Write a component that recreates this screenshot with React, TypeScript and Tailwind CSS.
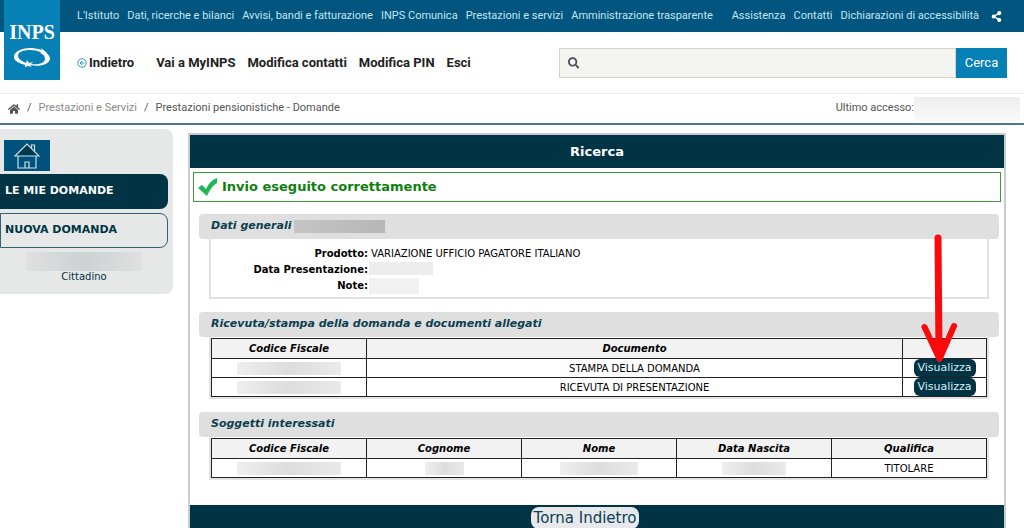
import React, { useState } from 'react';
import { FaHome, FaSearch, FaShareAlt } from 'react-icons/fa';

interface Documento {
  id: number;
  nome: string;
}

const menuPrincipale = [
  "L'Istituto",
  'Dati, ricerche e bilanci',
  'Avvisi, bandi e fatturazione',
  'INPS Comunica',
  'Prestazioni e servizi',
  'Amministrazione trasparente',
];

const menuServizio = ['Assistenza', 'Contatti', 'Dichiarazioni di accessibilità'];

const azioni = ['Vai a MyINPS', 'Modifica contatti', 'Modifica PIN', 'Esci'];

const documenti: Documento[] = [
  { id: 1, nome: 'STAMPA DELLA DOMANDA' },
  { id: 2, nome: 'RICEVUTA DI PRESENTAZIONE' },
];

const Logo = () => (
  <a
    href="#"
    aria-label="INPS"
    className="absolute top-0 left-1 flex h-20 w-14 flex-col items-center bg-[#0680b5] pt-[18px] text-white"
  >
    <span className="font-['Liberation_Serif',serif] text-xl leading-7 font-bold">INPS</span>
    <svg className="mt-[2px] h-5 w-9" viewBox="0 0 36 20" fill="currentColor">
      <path
        fillRule="evenodd"
        d="M0 8C1 3 8 0 17 0c4 0 8 1 11 2l-1-2 6 5-6 1 1-1C25 3 20 2 16 2 9 2 4 4 4 8c0 3 4 5 8 7l1-3 2 3 4-1-3 3 2 2-4-1-3 1v-2C4 15-1 12 0 8Z"
      />
      <path d="M16 16c9 1 15-1 15-5 0-3-2-5-5-6l5-1c3 2 5 4 5 7-1 6-11 8-20 6Z" />
    </svg>
  </a>
);

const TopBar = () => (
  <div className="flex h-8 items-center justify-between bg-[#01557e] pl-[77px] text-[#c3e6f3]">
    <nav className="flex items-center gap-2 whitespace-nowrap">
      {menuPrincipale.map((voce) => (
        <a key={voce} href="#">{voce}</a>
      ))}
    </nav>
    <nav className="flex items-center gap-2 pr-[22px] whitespace-nowrap">
      {menuServizio.map((voce) => (
        <a key={voce} href="#">{voce}</a>
      ))}
      <button type="button" aria-label="Condividi" className="pl-1 text-white">
        <FaShareAlt size={11} />
      </button>
    </nav>
  </div>
);

const NavBar = () => {
  const [query, setQuery] = useState('');

  return (
    <div className="flex h-[61px] items-center justify-between pr-[17px] pl-[77px]">
      <nav className="flex items-center gap-3 text-[13px] font-bold whitespace-nowrap text-[#222]">
        <a href="#" className="mr-[10px] flex items-center gap-[2px]">
          <svg className="h-[10px] w-[10px] text-[#2b9bc7]" viewBox="0 0 20 20" fill="none" stroke="currentColor" strokeWidth={2}>
            <circle cx="10" cy="10" r="8.5" />
            <path d="M15 10H6M10 6l-4 4 4 4" />
          </svg>
          Indietro
        </a>
        {azioni.map((azione) => (
          <a key={azione} href="#">{azione}</a>
        ))}
      </nav>
      <form className="flex h-[30px] w-[448px]" onSubmit={(e) => e.preventDefault()}>
        <label className="flex flex-1 items-center border border-[#d3d5cd] bg-[#f4f5f0] pl-2">
          <FaSearch size={12} className="text-[#4a4f58]" />
          <input
            type="text"
            aria-label="Cerca nel sito"
            className="ml-2 w-full bg-transparent outline-none"
            value={query}
            onChange={(e) => setQuery(e.target.value)}
          />
        </label>
        <button type="submit" className="w-[51px] bg-[#0680b5] text-[13px] text-white">Cerca</button>
      </form>
    </div>
  );
};

const Breadcrumb = () => (
  <div className="flex h-8 items-center justify-between border-t border-b-2 border-t-[#ececec] border-b-[#4c7698] pr-1 pl-2 text-[11px] text-[#555]">
    <nav className="flex items-center gap-[7px]">
      <a href="#" aria-label="Home" className="flex"><FaHome size={12} /></a>
      <span>/</span>
      <a href="#" className="text-[#8a8a8a]">Prestazioni e Servizi</a>
      <span>/</span>
      <span>Prestazioni pensionistiche - Domande</span>
    </nav>
    <div className="flex items-center">
      Ultimo accesso:
      <span className="h-6 w-[106px] bg-linear-to-b from-[#eeeeee] to-[#fafafa]" />
    </div>
  </div>
);

const Sidebar = () => (
  <aside className="w-[173px] shrink-0 self-start rounded-r-lg bg-[#e6e8e8] pt-[11px] pb-[11px] text-[#003444]">
    <a href="#" aria-label="Pagina iniziale" className="ml-1 flex h-[31px] w-[46px] items-center justify-center bg-[#00527c]">
      <svg className="h-[26px] w-[26px]" viewBox="0 0 26 26" fill="none" stroke="#c9e2ea" strokeWidth={1.2}>
        <path d="M4 13v12h18V13" />
        <path d="M1 13 13 1l12 12H1Z" fill="#003850" />
        <path d="M17.500 5V2h3v6.500M11 25v-6h4v6" />
      </svg>
    </a>
    <nav className="mt-[3px] mr-[5px] flex flex-col gap-1 text-[11px] font-bold">
      <a href="#" className="flex h-[35px] items-center rounded-r-lg bg-[#003444] pl-[5px] text-white">LE MIE DOMANDE</a>
      <a href="#" className="flex h-[35px] items-center rounded-r-lg border border-[#2c6472] pl-1">NUOVA DOMANDA</a>
    </nav>
    <div className="mt-1 flex flex-col items-center pr-[5px] text-[10px]">
      <span className="h-[19px] w-[116px] bg-linear-to-r from-[#dfe1e1] via-[#ced1d1] to-[#dfe1e1]" />
      <span className="leading-3">Cittadino</span>
    </div>
  </aside>
);

const Sezione: React.FC<{ titolo: string; oscurato?: boolean; children: React.ReactNode }> = ({
  titolo,
  oscurato,
  children,
}) => (
  <section className="mr-[5px] ml-[9px]">
    <h2 className="flex h-[25px] items-center rounded bg-[#dfdfdf] px-3 text-[11px] font-bold text-[#0b3f50] italic">
      {titolo}
      {oscurato && <span className="ml-[3px] h-[13px] w-[91px] bg-linear-to-r from-[#c4c4c4] to-[#b7b7b7]" />}
    </h2>
    {children}
  </section>
);

const Oscurato: React.FC<{ className: string }> = ({ className }) => (
  <span className={`mx-auto block h-[13px] bg-linear-to-r from-[#eeeeee] via-[#dddddd] to-[#eaeaea] ${className}`} />
);

// Freccia rossa che indica il pulsante "Visualizza"
const Freccia = () => (
  <svg
    className="pointer-events-none absolute -bottom-[5px] left-[18px] h-[132px] w-9"
    viewBox="0 0 36 132"
    fill="none"
    stroke="#fa0a0a"
    strokeLinecap="round"
    strokeLinejoin="round"
  >
    <path d="M17 7 18 124" strokeWidth={7} />
    <path d="M3.500 96 18.500 128 33 95" strokeWidth={6} />
    <path d="M13 109 18.500 128 24 109Z" strokeWidth={3} fill="#fa0a0a" />
  </svg>
);

const cella = 'border border-[#222] p-0';
const tabella = 'w-full table-fixed border-collapse text-center text-[10px]';

const App: React.FC = () => {
  return (
    <div className="min-h-screen bg-white font-['DejaVu_Sans',Verdana,sans-serif] text-black">
      <header className="relative font-[Roboto,sans-serif] text-[11px]">
        <TopBar />
        <NavBar />
        <Breadcrumb />
        <Logo />
      </header>

      <div className="flex items-start gap-[15px] pt-1 pr-[18px]">
        <Sidebar />

        <main className="mt-1 flex-1 border-2 border-[#c9cccc]">
          <h1 className="flex h-[33px] items-center justify-center bg-[#003444] text-[13px] font-bold text-white">Ricerca</h1>

          <div className="mx-[3px] mt-1 flex h-[30px] items-center gap-1 border border-[#3c9a3c] pl-1 text-[13px] font-bold text-[#0f800f]">
            <svg className="h-5 w-5" viewBox="0 0 20 20">
              <path d="M0 11 4 8l4 4C11 6 14 3 19 1l0 5C14 9 12 13 9 19Z" fill="#1fb855" />
            </svg>
            Invio eseguito correttamente
          </div>

          <div className="mt-3 flex flex-col gap-[13px]">
            <Sezione titolo="Dati generali" oscurato>
              <dl className="mx-[10px] grid grid-cols-[157px_1fr] gap-x-px border-2 border-t-0 border-[#e2e2e2] pt-[7px] pb-[3px] text-[10px] leading-4">
                <dt className="text-right font-bold">Prodotto:</dt>
                <dd className="pl-[2px]">VARIAZIONE UFFICIO PAGATORE ITALIANO</dd>
                <dt className="text-right font-bold">Data Presentazione:</dt>
                <dd><span className="block h-[13px] w-[64px] bg-[#ececec]" /></dd>
                <dt className="text-right font-bold">Note:</dt>
                <dd><span className="block h-4 w-[50px] bg-[#f1f1f1]" /></dd>
              </dl>
            </Sezione>

            <Sezione titolo="Ricevuta/stampa della domanda e documenti allegati">
              <div className="mx-[10px] border-2 border-t-0 border-[#e2e2e2] pt-px">
                <table className={tabella}>
                  <thead>
                    <tr className="h-5 bg-[#f2f2f2] italic">
                      <th className={`w-1/5 ${cella}`}>Codice Fiscale</th>
                      <th className={cella}>Documento</th>
                      <th className={`relative w-[84px] ${cella}`} aria-label="Azioni">
                        <Freccia />
                      </th>
                    </tr>
                  </thead>
                  <tbody>
                    {documenti.map((documento) => (
                      <tr key={documento.id} className="h-[19px]">
                        <td className={cella}><Oscurato className="w-[104px]" /></td>
                        <td className={cella}>{documento.nome}</td>
                        <td className={cella}>
                          <button type="button" className="mx-auto block h-[18px] w-[62px] rounded-md bg-[#003444] text-[11px] leading-4 text-[#d9eef2]">
                            Visualizza
                          </button>
                        </td>
                      </tr>
                    ))}
                  </tbody>
                </table>
              </div>
            </Sezione>

            <Sezione titolo="Soggetti interessati">
              <div className="mx-[10px] border-2 border-t-0 border-[#e2e2e2] pt-px">
                <table className={tabella}>
                  <thead>
                    <tr className="h-5 bg-[#f2f2f2] italic">
                      <th className={cella}>Codice Fiscale</th>
                      <th className={cella}>Cognome</th>
                      <th className={cella}>Nome</th>
                      <th className={cella}>Data Nascita</th>
                      <th className={cella}>Qualifica</th>
                    </tr>
                  </thead>
                  <tbody>
                    <tr className="h-[19px]">
                      <td className={cella}><Oscurato className="w-[104px]" /></td>
                      <td className={cella}><Oscurato className="w-[39px]" /></td>
                      <td className={cella}><Oscurato className="w-[78px]" /></td>
                      <td className={cella}><Oscurato className="w-[64px]" /></td>
                      <td className={cella}>TITOLARE</td>
                    </tr>
                  </tbody>
                </table>
              </div>
            </Sezione>
          </div>

          <div className="mt-[25px] flex justify-center bg-[#003444] pt-[2px] pr-6">
            <button type="button" className="h-[22px] rounded-lg bg-[#e6e8ec] px-[3px] text-[15px] leading-5 text-[#0b3f50]">Torna Indietro</button>
          </div>
        </main>
      </div>
    </div>
  );
};

export default App;
